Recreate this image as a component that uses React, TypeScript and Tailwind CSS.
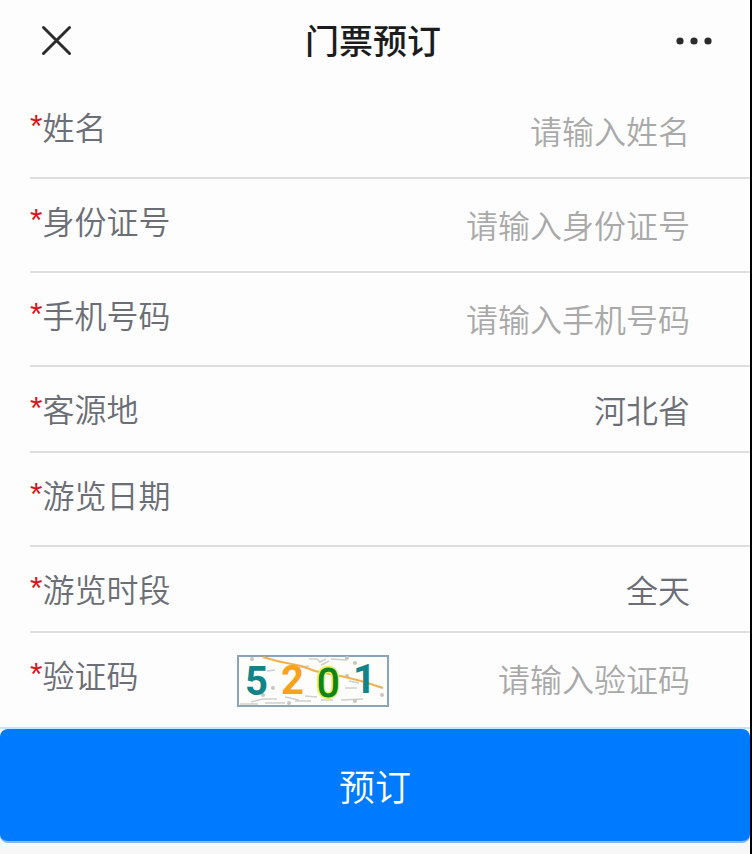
import { useState } from 'react';
import type { ReactNode } from 'react';

type FieldProps = {
  id: string;
  label: string;
  last?: boolean;
  extra?: ReactNode;
  children: ReactNode;
};

function Field({ id, label, last, extra, children }: FieldProps) {
  return (
    <div
      className={`ml-[30px] flex items-start border-b-2 pt-[18px] pr-[60px] ${
        last ? 'border-transparent pb-[18px]' : 'border-[#dfdfe0] pb-5'
      }`}
    >
      <label htmlFor={id} className="flex w-[207px] shrink-0 leading-[46px] text-[#6b6e76]">
        <span className="font-['Liberation_Sans',sans-serif] font-normal text-[#d8131a]">*</span>
        {label}
      </label>
      {extra}
      <div className="min-w-0 flex-1">{children}</div>
    </div>
  );
}

const inputClass =
  'block h-[54px] w-full bg-transparent text-right text-[#6b6e76] outline-none placeholder:text-[#a9a9a9]';
const selectClass =
  'block h-[46px] w-full appearance-none bg-transparent text-right [text-align-last:right] text-[#6b6e76] outline-none';

function Captcha() {
  return (
    <svg viewBox="0 0 152 52" className="mt-1 h-[52px] w-[152px] shrink-0" role="img" aria-label="验证码">
      <rect x="1" y="1" width="150" height="50" fill="#fdfdfb" stroke="#8ba5b8" strokeWidth="2" />
      <g fill="none" stroke="#cfcfcf" strokeWidth="1.5">
        <path d="M30 16l8-1M72 4h8l3 3 6-3M94 4l16 1M62 12l10-1M84 10l8-4" />
        <path d="M14 47l12-3h14M48 42l14 3M68 41l12 1M28 48h20M58 46h16" />
        <path d="M108 33h12M84 45h12M104 45l22-1M112 26l10 2M3 49h18" />
      </g>
      <g fill="#c9c5be">
        <circle cx="15" cy="4" r="2" />
        <circle cx="36" cy="33" r="2" />
        <circle cx="110" cy="3" r="2" />
        <circle cx="118" cy="8" r="2" />
        <circle cx="26" cy="40" r="2" />
        <circle cx="52" cy="48" r="2" />
        <circle cx="118" cy="46" r="2" />
        <circle cx="145" cy="40" r="2" />
        <circle cx="110" cy="21" r="2" />
      </g>
      <path d="M26 2l14 4 24 5 14 5 30 6 16 4 22 7" fill="none" stroke="#f3b04a" strokeWidth="2" />
      <g fontFamily="Roboto, sans-serif" fontWeight="700">
        <text x="8" y="40" fontSize="40" fill="#128489">5</text>
        <text x="44" y="39" fontSize="40" fill="#f9a21b">2</text>
        <text x="80" y="42" fontSize="40" fontWeight="400" fill="#0f8418" stroke="#e4ee55" strokeWidth="4" paintOrder="stroke">0</text>
        <text x="80" y="42" fontSize="40" fontWeight="400" fill="#0f8418" stroke="#0f8418" strokeWidth="1">0</text>
        <text x="116" y="38" fontSize="40" fill="#128489">1</text>
      </g>
    </svg>
  );
}

export default function App() {
  const [province, setProvince] = useState('河北省');
  const [period, setPeriod] = useState('全天');

  return (
    <div className="min-h-screen border-r-2 border-black bg-[#f7f7f8] font-['Noto_Sans_CJK_SC',sans-serif] text-[32px] font-[350]">
      <div className="bg-[#fdfdfd]">
        <header className="flex h-[85px] items-center justify-between pr-[36px] pb-1.5 pl-[40px]">
          <button type="button" aria-label="关闭" className="flex size-8 items-center">
            <svg viewBox="0 0 32 32" className="size-8" fill="none" stroke="#2b2b2b" strokeWidth="3" strokeLinecap="round">
              <path d="M3.500 3.500l26 26M29.500 3.500l-26 26" />
            </svg>
          </button>
          <h1 className="text-[34px] leading-[50px] font-medium text-[#1c1c1c]">门票预订</h1>
          <button type="button" aria-label="更多" className="flex h-8 w-10 items-center">
            <svg viewBox="0 0 40 10" className="h-2.5 w-10" fill="#2b2b2b">
              <circle cx="6" cy="6" r="3.6" />
              <circle cx="20" cy="6" r="3.6" />
              <circle cx="34" cy="6" r="3.6" />
            </svg>
          </button>
        </header>

        <form onSubmit={(e) => e.preventDefault()}>
          <Field id="name" label="姓名">
            <input id="name" className={inputClass} placeholder="请输入姓名" />
          </Field>
          <Field id="idCard" label="身份证号">
            <input id="idCard" className={inputClass} placeholder="请输入身份证号" />
          </Field>
          <Field id="phone" label="手机号码">
            <input id="phone" type="tel" className={inputClass} placeholder="请输入手机号码" />
          </Field>
          <Field id="province" label="客源地">
            <select id="province" className={selectClass} value={province} onChange={(e) => setProvince(e.target.value)}>
              <option>河北省</option>
            </select>
          </Field>
          <Field id="date" label="游览日期">
            <input id="date" className={inputClass} />
          </Field>
          <Field id="period" label="游览时段">
            <select id="period" className={selectClass} value={period} onChange={(e) => setPeriod(e.target.value)}>
              <option>全天</option>
            </select>
          </Field>
          <Field id="captcha" label="验证码" last extra={<Captcha />}>
            <input id="captcha" className={inputClass} placeholder="请输入验证码" />
          </Field>
          <div className="border-t-2 border-[#c4e6fa] bg-[#f7f7f8]">
            <button
              type="submit"
              className="block h-[114px] w-full rounded-lg border-b-2 border-[#86b8ee] bg-[#007aff] text-4xl font-[350] text-white"
            >
              预订
            </button>
          </div>
        </form>
      </div>
    </div>
  );
}
